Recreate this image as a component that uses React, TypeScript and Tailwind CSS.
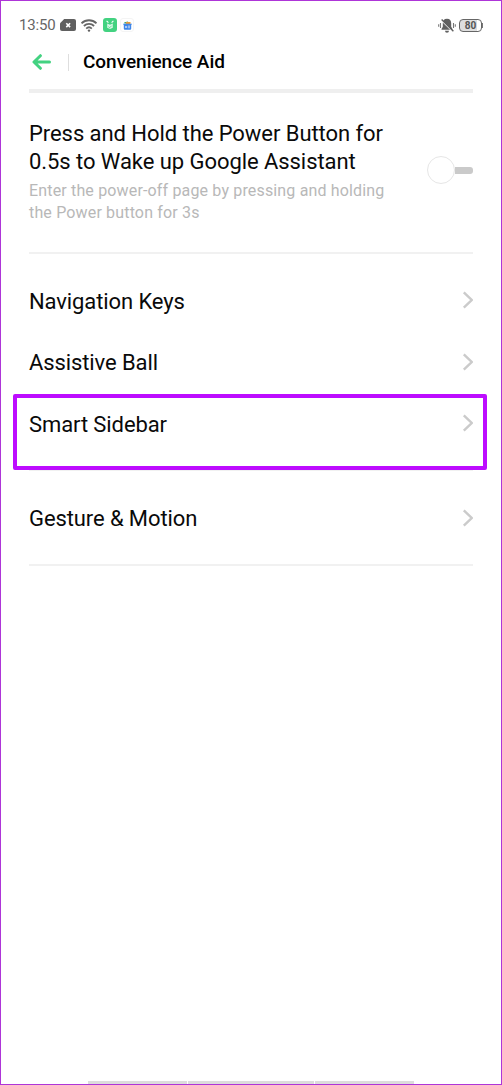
import { useState } from "react";
import { clsx } from "clsx";

function StatusBar() {
  return (
    <div className="flex h-12 shrink-0 items-center pl-[18px] pr-[18px] text-[#666]">
      <span className="w-[41px] pt-px text-[15px] tracking-[-0.15px]">13:50</span>
      <svg className="h-3 w-4" viewBox="0 0 16 12" fill="none">
        <path d="M4.2 0H14a2 2 0 0 1 2 2v8a2 2 0 0 1-2 2H2a2 2 0 0 1-2-2V4.2z" fill="#606060" />
        <path d="m6.3 4.3 3.8 3.8m0-3.8L6.3 8.1" stroke="#fff" strokeWidth="1.6" />
      </svg>
      <svg className="ml-[5px] h-[13px] w-4" viewBox="0 0 16 13" fill="none" stroke="#666" strokeWidth="1.8">
        <path d="M.5 4.3c4.2-4.1 10.8-4.1 15 0M2.9 7c2.9-2.8 7.3-2.8 10.2 0M5.2 9.6c1.6-1.5 4-1.5 5.6 0" />
        <circle cx="8" cy="11.6" r="1.2" fill="#606060" stroke="none" />
      </svg>
      <svg className="ml-1.5 h-[14px] w-[14px]" viewBox="0 0 14 14" fill="none">
        <rect width="14" height="14" rx="3" fill="#43d281" />
        <path d="m3.6 2.8 1.8 1.8M10.4 2.8 8.6 4.6" stroke="#fff" strokeWidth="1.1" />
        <path d="M4.2 5.4 7 6.8l2.8-1.4v4.3L7 11l-2.8-1.3z" fill="#d9f7e6" />
        <path d="m5.4 8.7 1.3 1 2-2" stroke="#43d281" strokeWidth="0.8" />
      </svg>
      <span className="ml-[3px] flex h-[14px] w-[14px] items-center justify-center rounded-[3px] border border-[#f4f4f4] bg-white">
        <svg className="h-[9px] w-[9px]" viewBox="0 0 9 9">
          <path d="M1.3 1.2 5 .5l.6 2H1.3z" fill="#43a36b" />
          <path d="M3 1h4.5v2H3z" fill="#e59a3c" />
          <path d="M0 2.7h9l-.8 1.6v3.5a1 1 0 0 1-1 1H1.8a1 1 0 0 1-1-1V4.3z" fill="#3f86e8" />
          <path d="M2 5h2.2v2H2zM5.2 4.5h1.6v2.7H5.2z" fill="#a9caf8" />
        </svg>
      </span>
      <svg className="ml-auto h-[15px] w-[18px]" viewBox="0 0 18 15" fill="none">
        <path d="M9 .8c-3 0-4.2 2-4.2 4.5v3.4L3.5 11v.7h11V11l-1.3-2.3V5.3C13.2 2.8 12 .8 9 .8zM7 12.7h4a2 2 0 0 1-4 0z" fill="#606060" />
        <path d="M4.4 3.2 14.5 13.3" stroke="#fff" strokeWidth="1.3" />
        <path d="m3.6 1.4 11.8 11.8" stroke="#606060" strokeWidth="1.4" />
        <path d="M2.5 5v5M.7 6.3v2.4M15.5 5v5M17.3 6.3v2.4" stroke="#777" strokeWidth="1.1" />
      </svg>
      <div className="ml-[3px] flex items-center">
        <div className="flex h-[13px] w-[23px] items-center justify-center rounded-[4px] border border-[#666] bg-[linear-gradient(to_right,#dedede_80%,#fff_80%)] pt-px text-[10px] font-bold leading-none text-[#555]">
          80
        </div>
        <div className="h-[5px] w-px bg-[#777]" />
      </div>
    </div>
  );
}

function Header() {
  return (
    <header className="flex h-[26px] shrink-0 items-center pl-[31px]">
      <svg className="h-4 w-[19px]" viewBox="0 0 19 16" fill="none" stroke="#43d281" strokeWidth="3">
        <path d="M8.4 1.7 2 8l6.4 6.3M2.5 8h15" strokeLinecap="round" strokeLinejoin="round" />
      </svg>
      <div className="ml-[17px] h-[17px] w-px bg-[#dedede]" />
      <h1 className="ml-[14px] text-[19px] font-medium tracking-[-0.03px] text-black">Convenience Aid</h1>
    </header>
  );
}

function Toggle() {
  const [on, setOn] = useState(false);

  return (
    <button
      type="button"
      role="switch"
      aria-checked={on}
      onClick={() => setOn(!on)}
      className={clsx("flex w-[46px] items-center", on && "flex-row-reverse")}
    >
      <span className="h-7 w-7 shrink-0 rounded-full border border-[#e6e6e6] bg-white" />
      <span className={clsx("h-[7px] flex-1", on ? "rounded-l-[3px] bg-[#43d281]" : "rounded-r-[3px] bg-[#cacaca]")} />
    </button>
  );
}

function SettingRow({ label, highlighted = false }: { label: string; highlighted?: boolean }) {
  return (
    <div className="relative flex h-[61.5px] items-center justify-between text-[22px] tracking-[-0.1px] text-[#0a0a0a]">
      <span className="pt-px">{label}</span>
      <svg className="mb-px h-[18px] w-[11px]" viewBox="0 0 11 18" fill="none" stroke="#cbcbcb" strokeWidth="2.4">
        <path d="m1.8 1.3 7.9 7.7-7.9 7.7" />
      </svg>
      {highlighted && (
        <div className="pointer-events-none absolute -left-4 -right-[14px] top-[1px] z-10 h-[76px] rounded-[2px] border-4 border-[#bd0cff]" />
      )}
    </div>
  );
}

function Divider() {
  return <div className="h-[2px] shrink-0 bg-[#f1f1f1]" />;
}

export default function App() {
  return (
    <div className="flex h-[1085px] w-[502px] flex-col border border-[#ae35d8] bg-white font-[Roboto,sans-serif]">
      <StatusBar />
      <Header />

      <main className="mt-[14px] flex flex-1 flex-col px-7">
        <div className="h-1 shrink-0 bg-[#efefef]" />

        <section className="flex h-[159px] shrink-0 justify-between pt-[27px]">
          <div>
            <h2 className="whitespace-nowrap text-[22px] leading-7 tracking-[-0.06px] text-[#0a0a0a]">
              Press and Hold the Power Button for
              <br />
              0.5s to Wake up Google Assistant
            </h2>
            <p className="mt-1 whitespace-nowrap text-base leading-[22px] tracking-[0.16px] text-[#b8b8b8]">
              Enter the power-off page by pressing and holding
              <br />
              the Power button for 3s
            </p>
          </div>
          <div className="flex h-[100px] items-center">
            <Toggle />
          </div>
        </section>
        <Divider />

        <div className="h-[215px] shrink-0 pt-4">
          <SettingRow label="Navigation Keys" />
          <SettingRow label="Assistive Ball" />
          <SettingRow label="Smart Sidebar" highlighted />
        </div>
        <Divider />

        <div className="h-[93px] shrink-0 pt-[16.5px]">
          <SettingRow label="Gesture & Motion" />
        </div>
        <Divider />
      </main>

      <div className="flex shrink-0 gap-px pl-[87px]">
        <div className="h-[3px] w-[99px] bg-[#dcdcdc]" />
        <div className="h-[3px] w-[126px] bg-[#dcdcdc]" />
        <div className="h-[3px] w-[99px] bg-[#dcdcdc]" />
      </div>
    </div>
  );
}
